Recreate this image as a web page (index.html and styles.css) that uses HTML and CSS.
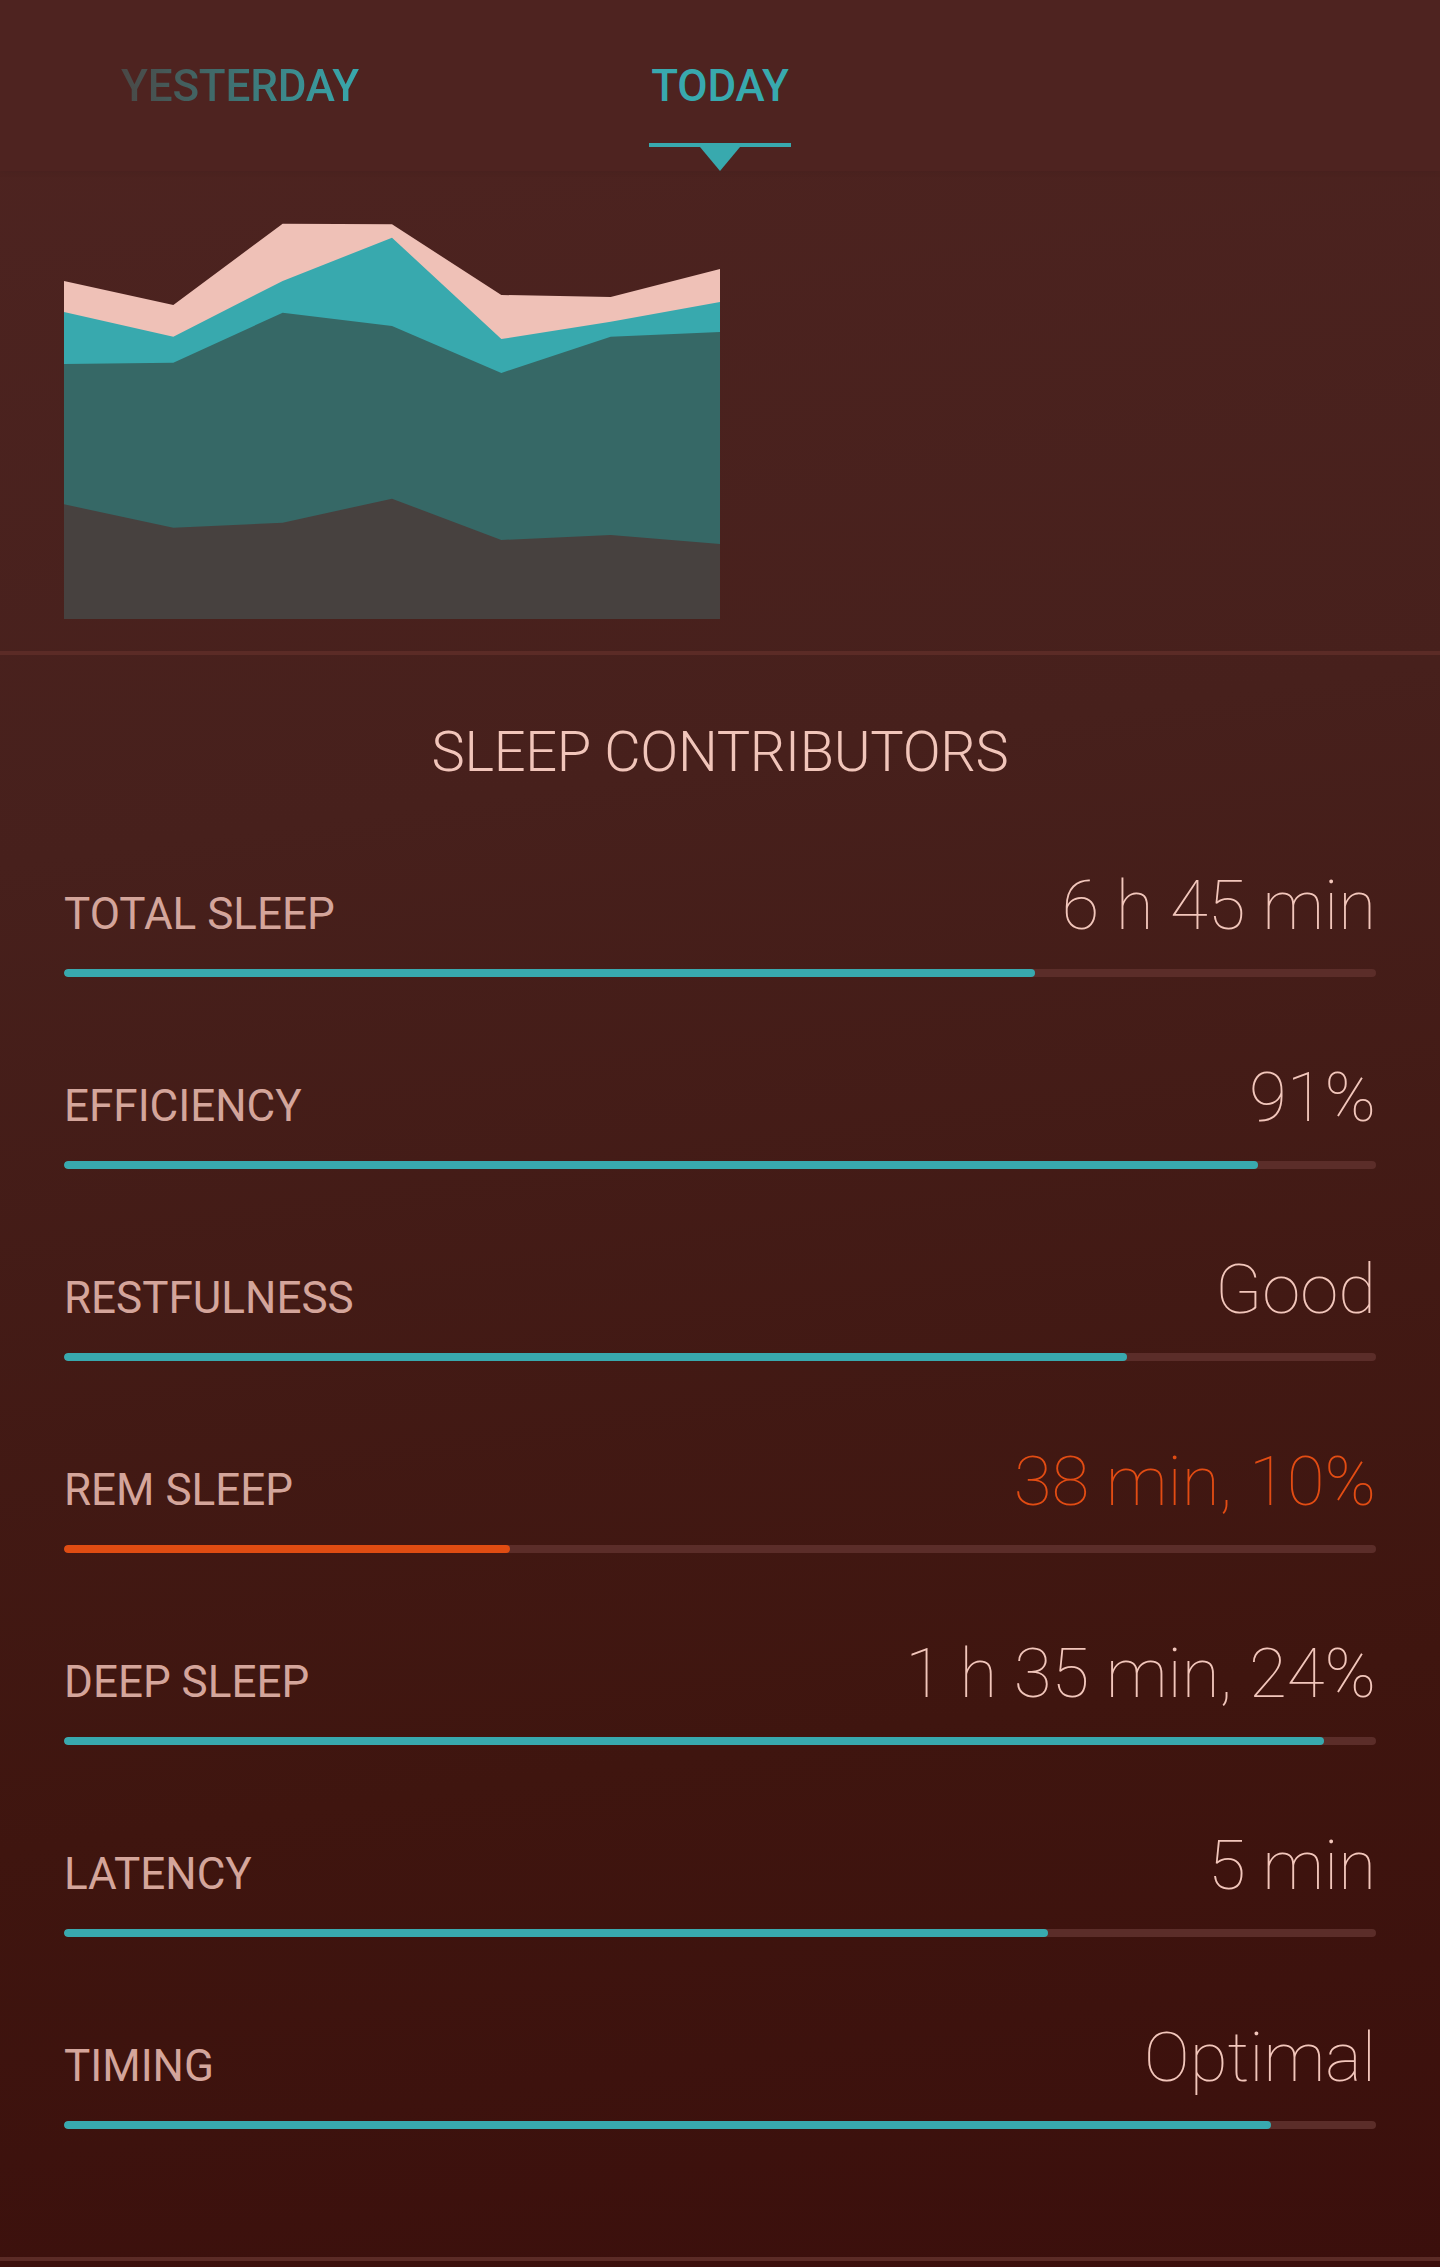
FILE: index.html
```html
<!DOCTYPE html>
<html lang="en">
<head>
<meta charset="utf-8">
<title>Sleep</title>
<link rel="stylesheet" href="styles.css">
</head>
<body>
<div class="page">
  <header class="tabs">
    <div class="tab">
      <span class="tab-label tab-fade">YESTERDAY</span>
    </div>
    <div class="tab">
      <span class="tab-label tab-active">TODAY</span>
      <span class="tab-underline"></span>
      <svg class="tab-pointer" width="40" height="24" viewBox="0 0 40 24"><polygon points="0,0 40,0 20,24" fill="#38a9ae"/></svg>
    </div>
    <div class="tab"></div>
  </header>

  <section class="chart">
    <svg class="chart-svg" width="656" height="400" viewBox="0 0 656 400">
      <polygon fill="#efc1b7" points="0,62 109.33,86 218.67,4.7 328,5.3 437.33,76 546.67,78 656,50 656,400 0,400"/>
      <polygon fill="#38a9ae" points="0,93 109.33,117.7 218.67,62 328,18.7 437.33,120 546.67,102.7 656,83 656,400 0,400"/>
      <polygon fill="#366866" points="0,145 109.33,143.7 218.67,93.7 328,107 437.33,154 546.67,117.7 656,113 656,400 0,400"/>
      <polygon fill="#47413f" points="0,285.3 109.33,308.7 218.67,303.7 328,279.7 437.33,321 546.67,316 656,325 656,400 0,400"/>
    </svg>
  </section>

  <div class="divider"></div>

  <section class="contributors">
    <h2 class="section-title">SLEEP CONTRIBUTORS</h2>

    <div class="metric">
      <div class="metric-head">
        <span class="metric-label">TOTAL SLEEP</span>
        <span class="metric-value">6 h 45 min</span>
      </div>
      <div class="bar"><div class="bar-fill" style="width:74%"></div></div>
    </div>

    <div class="metric">
      <div class="metric-head">
        <span class="metric-label">EFFICIENCY</span>
        <span class="metric-value">91%</span>
      </div>
      <div class="bar"><div class="bar-fill" style="width:91%"></div></div>
    </div>

    <div class="metric">
      <div class="metric-head">
        <span class="metric-label">RESTFULNESS</span>
        <span class="metric-value">Good</span>
      </div>
      <div class="bar"><div class="bar-fill" style="width:81%"></div></div>
    </div>

    <div class="metric metric-warn">
      <div class="metric-head">
        <span class="metric-label">REM SLEEP</span>
        <span class="metric-value">38 min, 10%</span>
      </div>
      <div class="bar"><div class="bar-fill" style="width:34%"></div></div>
    </div>

    <div class="metric">
      <div class="metric-head">
        <span class="metric-label">DEEP SLEEP</span>
        <span class="metric-value">1 h 35 min, 24%</span>
      </div>
      <div class="bar"><div class="bar-fill" style="width:96%"></div></div>
    </div>

    <div class="metric">
      <div class="metric-head">
        <span class="metric-label">LATENCY</span>
        <span class="metric-value">5 min</span>
      </div>
      <div class="bar"><div class="bar-fill" style="width:75%"></div></div>
    </div>

    <div class="metric">
      <div class="metric-head">
        <span class="metric-label">TIMING</span>
        <span class="metric-value">Optimal</span>
      </div>
      <div class="bar"><div class="bar-fill" style="width:92%"></div></div>
    </div>
  </section>

  <div class="divider"></div>
</div>
</body>
</html>
```

FILE: styles.css
```css
* {
  box-sizing: border-box;
}

html, body {
  margin: 0;
  padding: 0;
}

body {
  font-family: Roboto, "Liberation Sans", sans-serif;
  background: #3d110e;
}

.page {
  width: 1440px;
  min-height: 2267px;
  background: linear-gradient(172deg, #4e2421 0%, #47201c 35%, #3f150f 75%, #3b0f0c 100%);
}

/* Tabs */
.tabs {
  display: grid;
  grid-template-columns: 480px 480px 480px;
  height: 171px;
  background: #4e2320;
  box-shadow: 0 2px 6px rgba(0, 0, 0, 0.05);
  position: relative;
}

.tab {
  display: flex;
  flex-direction: column;
  align-items: center;
  padding-top: 60px;
}

.tab-label {
  font-size: 44px;
  line-height: 52px;
  font-weight: 500;
  letter-spacing: -0.2px;
}

.tab-fade {
  background: linear-gradient(90deg, #4a4846 0%, #3f6f6f 45%, #38a9ae 100%);
  -webkit-background-clip: text;
  background-clip: text;
  color: transparent;
}

.tab-active {
  color: #38a9ae;
}

.tab-underline {
  display: block;
  width: 142px;
  height: 4px;
  margin-top: 31px;
  background: #38a9ae;
}

.tab-pointer {
  display: block;
}

/* Chart */
.chart {
  padding: 48px 64px 32px;
}

.chart-svg {
  display: block;
}

.divider {
  height: 4px;
  background: #5b2b26;
}

/* Contributors */
.contributors {
  padding: 64px 64px 128px;
}

.section-title {
  margin: 0;
  text-align: center;
  font-size: 56px;
  line-height: 66px;
  font-weight: 300;
  color: #f1c5ba;
  letter-spacing: -0.3px;
}

.metric {
  margin-top: 87px;
}

.metric-head {
  display: flex;
  justify-content: space-between;
  align-items: baseline;
  height: 68px;
}

.metric-label {
  font-size: 44px;
  line-height: 44px;
  font-weight: 400;
  color: #d4a59b;
}

.metric-value {
  font-size: 69px;
  line-height: 68px;
  font-weight: 100;
  color: #f2c6bb;
}

.bar {
  margin-top: 29px;
  height: 8px;
  border-radius: 4px;
  background: #5b2d29;
  overflow: hidden;
}

.bar-fill {
  height: 100%;
  border-radius: 4px;
  background: #38a9ae;
}

.metric-warn .metric-value {
  color: #e24c13;
}

.metric-warn .bar-fill {
  background: #e04c12;
}
```
